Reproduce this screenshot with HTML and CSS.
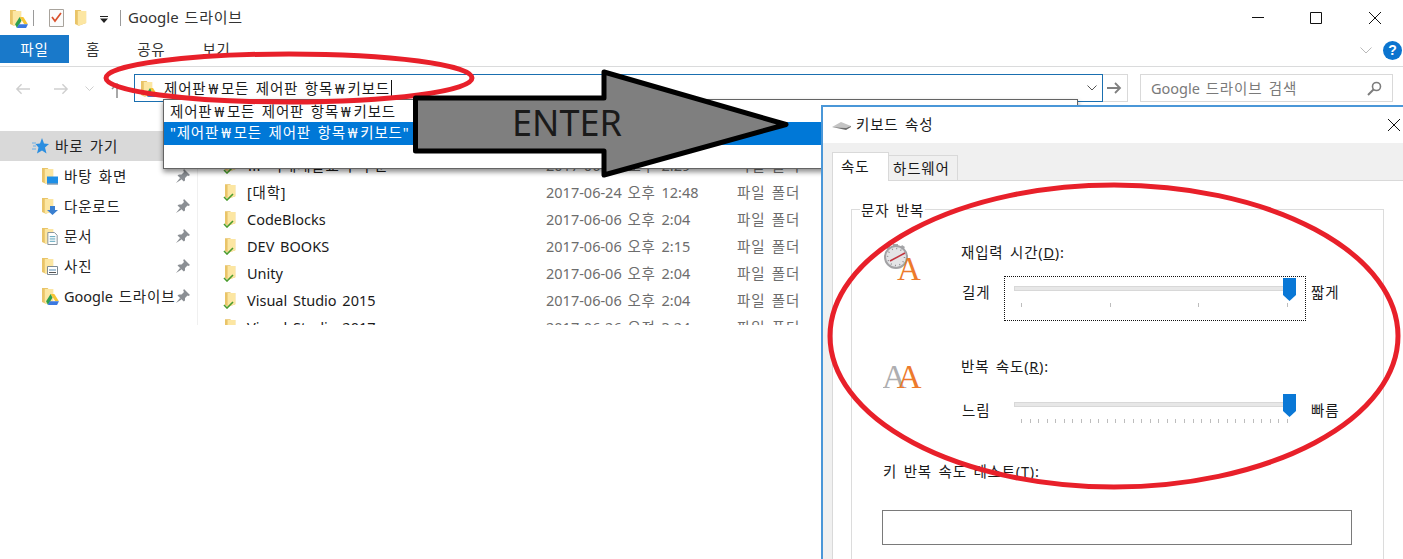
FILE: index.html
```html
<!DOCTYPE html>
<html lang="ko">

	<head>
		<meta charset="UTF-8">
		<title>Google 드라이브</title>
		<link rel="stylesheet" href="styles.css">
	</head>

	<body>
		<svg class="defs" width="0" height="0">
			<symbol id="folder" viewBox="0 0 14 18">
				<path d="M0 1h6l1 1h5v13l-8 3-4-2z" fill="#e9c468"/>
				<path d="M3 2h9v13l-8 3-1-1z" fill="#fce6a2"/>
			</symbol>
			<symbol id="check" viewBox="0 0 11 8">
				<path d="M1 4l3 3 6-6" fill="none" stroke="#4a9c2d" stroke-width="1.6"/>
			</symbol>
			<symbol id="drive" viewBox="0 0 14 12">
				<path d="M5 0h4l5 8h-4z" fill="#f6c533"/>
				<path d="M5 0l2 4-5 8-2-4z" fill="#2c9f4d"/>
				<path d="M4 8h10l-2 4H2z" fill="#3b78e0"/>
			</symbol>
			<symbol id="pin" viewBox="0 0 14 14">
				<path d="M8 0l6 6-1.500 1-1-.5L9 9v2.500L7.800 12.500 1.500 6.500 3 5.500h2.500L8 3l-.8-1.500zM4 9l1.500 1.500L0 14z" fill="#8b8f94"/>
			</symbol>
		</svg>

		<div class="page">
			<header class="titlebar">
				<svg class="ico-folder"><use href="#folder"/></svg>
				<svg class="ico-qa-drive"><use href="#drive"/></svg>
				<span class="sep"></span>
				<svg class="ico-doc" viewBox="0 0 15 18">
					<path d="M.5.500h14v17H.5z" fill="#fbfbfb" stroke="#a8a39c"/>
					<path d="M3 8l3 4 6-8" fill="none" stroke="#d9512c" stroke-width="1.7"/>
				</svg>
				<svg class="ico-qa-folder"><use href="#folder"/></svg>
				<svg class="ico-qa-more" viewBox="0 0 8 7">
					<path d="M0 0h8v1H0zM0 2.500h8L4 7z" fill="#222"/>
				</svg>
				<span class="sep sep-title"></span>
				<span class="win-title">Google <span class="ko">드라이브</span></span>
				<div class="win-btns">
					<span class="win-btn"><svg width="12" height="12"><path d="M0 5.500h12" stroke="#111"/></svg></span>
					<span class="win-btn"><svg width="12" height="12"><path d="M.5.500h11v11H.5z" fill="none" stroke="#111"/></svg></span>
					<span class="win-btn"><svg width="12" height="12"><path d="M0 0l12 12M12 0L0 12" stroke="#111"/></svg></span>
				</div>
			</header>

			<nav class="ribbon">
				<span class="tab-file ko">파일</span>
				<span class="tab tab-home ko">홈</span>
				<span class="tab tab-share ko">공유</span>
				<span class="tab tab-view ko">보기</span>
				<svg class="ribbon-fold" width="12" height="7"><path d="M.5.500L6 6 11.500.5" fill="none" stroke="#b9b9b9"/></svg>
				<span class="help">?</span>
			</nav>

			<div class="navbar">
				<svg class="nav-ico nav-back" width="15" height="12" viewBox="0 0 16 12"><path d="M16 6H2M7 1L2 6l5 5" fill="none" stroke="#cfcfcf" stroke-width="1.500"/></svg>
				<svg class="nav-ico nav-forward" width="15" height="12" viewBox="0 0 16 12"><path d="M0 6h14M9 1l5 5-5 5" fill="none" stroke="#cfcfcf" stroke-width="1.500"/></svg>
				<svg class="nav-ico nav-recent" width="9" height="6"><path d="M.5.500l4 4 4-4" fill="none" stroke="#cfcfcf"/></svg>
				<svg class="nav-ico nav-up" width="12" height="16" viewBox="0 0 12 16"><path d="M6 16V2M1 7l5-5 5 5" fill="none" stroke="#8c8c8c" stroke-width="1.500"/></svg>
				<div class="address">
					<svg class="addr-folder"><use href="#folder"/></svg>
					<svg class="addr-drive"><use href="#drive"/></svg>
					<span class="addr-text ko">제어판<span class="won">₩</span>모든 제어판 항목<span class="won">₩</span>키보드</span>
					<span class="caret"></span>
					<svg class="addr-chevron" width="10" height="6"><path d="M.5.500L5 5 9.500.5" fill="none" stroke="#555"/></svg>
				</div>
				<span class="go"><svg width="15" height="12" viewBox="0 0 15 12"><path d="M0 6h13M8 1l5 5-5 5" fill="none" stroke="#808080" stroke-width="1.800"/></svg></span>
				<div class="search">
					<span class="search-text">Google <span class="ko">드라이브 검색</span></span>
					<svg width="15" height="15" viewBox="0 0 15 15"><circle cx="9.500" cy="5.500" r="4" fill="none" stroke="#7c7c7c" stroke-width="1.600"/><path d="M6.500 8.500L1 14" stroke="#7c7c7c" stroke-width="2"/></svg>
				</div>
			</div>

			<main class="content">
				<aside class="sidebar">
					<div class="side-row side-quick">
						<svg class="ico-star" viewBox="0 0 17 16">
							<path d="M10 0l2 5.500 5 .5-4 3.500 1.500 6L10 12.500 5 15.500l1.500-6-3-3.500 4.500-.5z" fill="#2b8ee0"/>
							<path d="M0 5h4M1 8h3M0 11h4" stroke="#6aaee6"/>
						</svg>
						<span class="side-name ko">바로 가기</span>
					</div>
					<div class="side-row">
						<span class="side-ico">
							<svg class="ico-side-folder"><use href="#folder"/></svg>
							<svg class="badge" viewBox="0 0 11 8"><path d="M0 0h11v7H0z" fill="#1e8fe6"/><path d="M0 7h11v1H0z" fill="#4a6f8f"/></svg>
						</span>
						<span class="side-name ko">바탕 화면</span>
						<svg class="pin"><use href="#pin"/></svg>
					</div>
					<div class="side-row">
						<span class="side-ico">
							<svg class="ico-side-folder"><use href="#folder"/></svg>
							<svg class="badge" viewBox="0 0 11 9"><path d="M3 0h5v4h3L5.500 9 0 4h3z" fill="#3a7fd0"/></svg>
						</span>
						<span class="side-name ko">다운로드</span>
						<svg class="pin"><use href="#pin"/></svg>
					</div>
					<div class="side-row">
						<span class="side-ico">
							<svg class="ico-side-folder"><use href="#folder"/></svg>
							<svg class="badge badge-doc" viewBox="0 0 11 14"><path d="M.5.500h7l3 3v10H.5z" fill="#fff" stroke="#7d8a94"/><path d="M2.500 5h6M2.500 7.500h6M2.500 10h6" stroke="#4a9ab5"/></svg>
						</span>
						<span class="side-name ko">문서</span>
						<svg class="pin"><use href="#pin"/></svg>
					</div>
					<div class="side-row">
						<span class="side-ico">
							<svg class="ico-side-folder"><use href="#folder"/></svg>
							<svg class="badge" viewBox="0 0 11 9"><path d="M.5.500h10v8H.5z" fill="#fff" stroke="#7d8a94"/><path d="M2 6h7v1H2z" fill="#555"/><path d="M2 3h7v2H2z" fill="#a9c5da"/></svg>
						</span>
						<span class="side-name ko">사진</span>
						<svg class="pin"><use href="#pin"/></svg>
					</div>
					<div class="side-row">
						<span class="side-ico">
							<svg class="ico-side-folder"><use href="#folder"/></svg>
							<svg class="badge badge-drive"><use href="#drive"/></svg>
						</span>
						<span class="side-name">Google <span class="ko">드라이브</span></span>
						<svg class="pin"><use href="#pin"/></svg>
					</div>
				</aside>

				<section class="files">
					<div class="file-row">
						<span class="file-ico"><svg class="file-folder"><use href="#folder"/></svg><svg class="file-check"><use href="#check"/></svg></span>
						<span class="ko">Ⅲ 미래개발교육 구분</span>
						<span class="file-meta">2017-06-24 <span class="ko">오후</span> 2:29</span>
						<span class="file-meta ko">파일 폴더</span>
					</div>
					<div class="file-row">
						<span class="file-ico"><svg class="file-folder"><use href="#folder"/></svg><svg class="file-check"><use href="#check"/></svg></span>
						<span class="ko">[대학]</span>
						<span class="file-meta">2017-06-24 <span class="ko">오후</span> 12:48</span>
						<span class="file-meta ko">파일 폴더</span>
					</div>
					<div class="file-row">
						<span class="file-ico"><svg class="file-folder"><use href="#folder"/></svg><svg class="file-check"><use href="#check"/></svg></span>
						<span>CodeBlocks</span>
						<span class="file-meta">2017-06-06 <span class="ko">오후</span> 2:04</span>
						<span class="file-meta ko">파일 폴더</span>
					</div>
					<div class="file-row">
						<span class="file-ico"><svg class="file-folder"><use href="#folder"/></svg><svg class="file-check"><use href="#check"/></svg></span>
						<span>DEV BOOKS</span>
						<span class="file-meta">2017-06-06 <span class="ko">오후</span> 2:15</span>
						<span class="file-meta ko">파일 폴더</span>
					</div>
					<div class="file-row">
						<span class="file-ico"><svg class="file-folder"><use href="#folder"/></svg><svg class="file-check"><use href="#check"/></svg></span>
						<span>Unity</span>
						<span class="file-meta">2017-06-06 <span class="ko">오후</span> 2:04</span>
						<span class="file-meta ko">파일 폴더</span>
					</div>
					<div class="file-row">
						<span class="file-ico"><svg class="file-folder"><use href="#folder"/></svg><svg class="file-check"><use href="#check"/></svg></span>
						<span>Visual Studio 2015</span>
						<span class="file-meta">2017-06-06 <span class="ko">오후</span> 2:04</span>
						<span class="file-meta ko">파일 폴더</span>
					</div>
					<div class="file-row">
						<span class="file-ico"><svg class="file-folder"><use href="#folder"/></svg><svg class="file-check"><use href="#check"/></svg></span>
						<span>Visual Studio 2017</span>
						<span class="file-meta">2017-06-26 <span class="ko">오전</span> 3:24</span>
						<span class="file-meta ko">파일 폴더</span>
					</div>
				</section>
			</main>

			<!-- 주소창 자동완성 -->
			<div class="suggest">
				<div class="suggest-item ko">제어판<span class="won">₩</span>모든 제어판 항목<span class="won">₩</span>키보드</div>
				<div class="suggest-item suggest-active ko">"제어판<span class="won">₩</span>모든 제어판 항목<span class="won">₩</span>키보드"</div>
			</div>

			<!-- 키보드 속성 창 -->
			<div class="dialog">
				<div class="dlg-title">
					<svg class="dlg-ico" width="19" height="8" viewBox="0 0 19 8"><path d="M0 5l9-5 10 4-5 2z" fill="#c4c4c4"/><path d="M0 5l14 1 5-2v1l-5 3z" fill="#6d6d6d"/></svg>
					<span class="dlg-name ko">키보드 속성</span>
					<svg class="dlg-close" width="12" height="12"><path d="M0 0l12 12M12 0L0 12" stroke="#111"/></svg>
				</div>
				<div class="dlg-body">
					<div class="dlg-tabs">
						<span class="dlg-tab dlg-tab-on ko">속도</span>
						<span class="dlg-tab ko">하드웨어</span>
					</div>
					<div class="dlg-panel">
						<fieldset class="group">
							<legend class="ko">문자 반복</legend>

							<div class="setting">
								<svg class="setting-ico" viewBox="0 0 40 40">
									<path d="M10 2h5v3h-5zM3 5l3-2 2 3-3 2zM22 5l-3-2-2 3 3 2z" fill="#a6a6a8"/>
									<circle cx="13" cy="15" r="11" fill="#e4e4e6" stroke="#a2a2a5" stroke-width="2"/>
									<circle cx="13" cy="15" r="8.500" fill="none" stroke="#8d8d90" stroke-width="1.500" stroke-dasharray="1 3.450"/>
									<path d="M7 19l15-8" stroke="#c2343f" stroke-width="1.500"/>
									<text class="ico-a" x="14" y="38" font-size="33">A</text>
								</svg>
								<div class="setting-main">
									<div class="setting-label ko">재입력 시간(<u>D</u>):</div>
									<div class="slider-row">
										<span class="end-label ko">길게</span>
										<div class="slider slider-focus">
											<div class="track"></div>
											<svg class="thumb" width="13" height="23"><path d="M0 0h13v17l-6.500 6L0 17z" fill="#0a78d6"/></svg>
											<div class="ticks"><i></i><i></i><i></i><i></i></div>
										</div>
										<span class="end-label end-right ko">짧게</span>
									</div>
								</div>
							</div>

							<div class="setting setting-second">
								<svg class="setting-ico" viewBox="0 0 40 40">
									<text class="ico-a ico-a-gray" x="-1" y="30" font-size="34">A</text>
									<text class="ico-a" x="14" y="30" font-size="34">A</text>
								</svg>
								<div class="setting-main">
									<div class="setting-label ko">반복 속도(<u>R</u>):</div>
									<div class="slider-row">
										<span class="end-label ko">느림</span>
										<div class="slider">
											<div class="track"></div>
											<svg class="thumb" width="13" height="23"><path d="M0 0h13v17l-6.500 6L0 17z" fill="#0a78d6"/></svg>
											<div class="ticks">
												<i></i><i></i><i></i><i></i><i></i><i></i><i></i><i></i>
												<i></i><i></i><i></i><i></i><i></i><i></i><i></i><i></i>
												<i></i><i></i><i></i><i></i><i></i><i></i><i></i><i></i>
												<i></i><i></i><i></i><i></i><i></i><i></i><i></i><i></i>
											</div>
										</div>
										<span class="end-label end-right ko">빠름</span>
									</div>
								</div>
							</div>

							<div class="test-label ko">키 반복 속도 테스트(<u>T</u>):</div>
							<div class="test-input"></div>
						</fieldset>
					</div>
				</div>
			</div>

			<!-- 빨간 타원, 화살표 표시 -->
			<svg class="marks" width="1403" height="559" viewBox="0 0 1403 559">
				<ellipse cx="289" cy="78" rx="183" ry="24" fill="none" stroke="#e8202a" stroke-width="5"/>
				<ellipse cx="1114" cy="336" rx="284" ry="151" fill="none" stroke="#e8202a" stroke-width="5"/>
				<path d="M415.500 98H604V72L786 124.500 604 175V151H415.500z" fill="#7f7f7f" stroke="#000" stroke-width="5" stroke-linejoin="round"/>
				<text class="enter" x="512" y="136">ENTER</text>
			</svg>
		</div>
	</body>

</html>
```

FILE: styles.css
```css
* {
	box-sizing: border-box;
}

body {
	margin: 0;
	background: #fff;
	color: #1a1a1a;
	font-family: "Noto Sans", "Noto Sans CJK KR", sans-serif;
	font-size: 14.5px;
	word-spacing: 2px;
	overflow: hidden;
}

/* hangul runs wider in the original font */
.ko {
	letter-spacing: .8px;
}

.won {
	margin: 0 2px;
}

.defs {
	position: absolute;
}

.page {
	position: relative;
	width: 1403px;
	height: 559px;
	overflow: hidden;
}

/* title bar */
.titlebar {
	height: 35px;
	display: flex;
	align-items: center;
	position: relative;
}

.ico-folder {
	width: 13px;
	height: 17px;
	margin-left: 10px;
}

.ico-qa-drive {
	width: 13px;
	height: 11px;
	margin: 9px 0 0 -8px;
}

.sep {
	width: 1px;
	height: 16px;
	background: #9a9a9a;
	margin-left: 5px;
}

.ico-doc {
	width: 15px;
	height: 18px;
	margin-left: 15px;
}

.ico-qa-folder {
	width: 13px;
	height: 17px;
	margin-left: 11px;
}

.ico-qa-more {
	width: 8px;
	height: 7px;
	margin: 3px 0 0 12px;
}

.sep-title {
	margin-left: 12px;
}

.win-title {
	margin-left: 7px;
	margin-top: -3px;
	font-size: 15px;
	color: #333;
}

.win-btns {
	margin-left: auto;
	display: flex;
	margin-right: -1px;
}

.win-btn {
	width: 58px;
	display: flex;
	justify-content: center;
}

.win-btn:last-child {
	margin-left: 1px;
}

/* ribbon tabs */
.ribbon {
	height: 32px;
	display: flex;
	align-items: flex-start;
	border-bottom: 1px solid #dadbdc;
}

.tab-file {
	width: 69px;
	height: 28px;
	padding-bottom: 2px;
	background: #1979ca;
	color: #fff;
	display: flex;
	align-items: center;
	justify-content: center;
}

.tab {
	line-height: 28px;
	color: #333;
}

.tab-home {
	margin-left: 17px;
}

.tab-share {
	margin-left: 37px;
}

.tab-view {
	margin-left: 37px;
}

.ribbon-fold {
	margin: 12px 0 0 auto;
}

.help {
	width: 19px;
	height: 19px;
	margin: 6px 1px 0 11px;
	border-radius: 50%;
	background: #0b74cf;
	color: #fff;
	font-family: "Liberation Sans", sans-serif;
	font-size: 14px;
	font-weight: bold;
	line-height: 19px;
	text-align: center;
}

/* address row */
.navbar {
	height: 64px;
	padding-top: 7px;
	display: flex;
	align-items: flex-start;
}

.nav-ico {
	flex: none;
}

.nav-back {
	margin: 9px 0 0 15px;
}

.nav-forward {
	margin: 9px 0 0 24px;
}

.nav-recent {
	margin: 12px 0 0 16px;
}

.nav-up {
	margin: 8px 0 0 17px;
}

.address {
	width: 969px;
	height: 28px;
	margin-left: 11px;
	padding-left: 6px;
	border: 1px solid #1a6fb0;
	display: flex;
	align-items: center;
	position: relative;
}

.addr-folder {
	width: 13px;
	height: 17px;
}

.addr-drive {
	position: absolute;
	left: 11px;
	top: 13px;
	width: 11px;
	height: 9px;
}

.addr-text {
	margin-left: 10px;
	margin-top: -2px;
}

.caret {
	width: 1px;
	height: 17px;
	background: #111;
	margin-left: 1px;
}

.addr-chevron {
	margin: 0 5px 0 auto;
}

.go {
	width: 26px;
	height: 28px;
	margin-left: -1px;
	border: 1px solid #d9d9d9;
	border-left: none;
	display: flex;
	align-items: center;
	justify-content: center;
}

.search {
	width: 253px;
	height: 28px;
	margin-left: 12px;
	padding: 0 10px;
	border: 1px solid #d9d9d9;
	display: flex;
	align-items: center;
	justify-content: space-between;
}

.search-text {
	margin-top: -2px;
	color: #7a7a7a;
}

/* sidebar and file list */
.content {
	height: 194px;
	display: flex;
	overflow: hidden;
}

.sidebar {
	width: 198px;
	flex: none;
	border-right: 1px solid #f0f0f0;
}

.side-row {
	height: 30px;
	display: flex;
	align-items: center;
	padding-left: 42px;
}

.side-quick {
	background: #d9d9d9;
	padding-left: 32px;
}

.ico-star {
	width: 17px;
	height: 16px;
	margin-right: 6px;
	flex: none;
}

.side-ico {
	width: 22px;
	height: 18px;
	flex: none;
	position: relative;
}

.ico-side-folder {
	width: 13px;
	height: 17px;
	display: block;
}

.badge {
	position: absolute;
	left: 5px;
	bottom: 0;
	width: 11px;
	height: 9px;
}

.badge-doc {
	height: 13px;
	left: 5px;
}

.badge-drive {
	left: 4px;
	width: 13px;
	height: 11px;
}

.side-name {
	width: 111px;
	flex: none;
	margin-bottom: 2px;
	white-space: nowrap;
	overflow: hidden;
	color: #222;
}

.pin {
	width: 14px;
	height: 14px;
	margin-left: 1px;
	flex: none;
}

.files {
	padding: 20px 0 0 25px;
}

.file-row {
	height: 27px;
	display: grid;
	grid-template-columns: 24px 299px 191px auto;
	align-items: center;
	white-space: nowrap;
}

.file-ico {
	width: 16px;
	height: 18px;
	position: relative;
}

.file-folder {
	position: absolute;
	left: 2px;
	top: 0;
	width: 12px;
	height: 16px;
}

.file-check {
	position: absolute;
	left: 0;
	bottom: 0;
	width: 11px;
	height: 8px;
}

.file-meta {
	color: #6d6d6d;
}

/* autocomplete under the address bar */
.suggest {
	position: absolute;
	left: 163px;
	top: 99px;
	width: 915px;
	height: 70px;
	background: #fff;
	border: 1px solid #646464;
	box-shadow: 0 3px 5px rgba(0, 0, 0, .45);
	padding-top: 1px;
}

.suggest-item {
	height: 21px;
	line-height: 20px;
	padding-left: 6px;
}

.suggest-active {
	height: 23px;
	line-height: 21px;
	background: #0078d7;
	color: #fff;
}

/* keyboard dialog */
.dialog {
	position: absolute;
	left: 821px;
	top: 105px;
	width: 582px;
	height: 454px;
	background: #f0f0f0;
	border-left: 2px solid #4a97d8;
	border-top: 2px solid #4a97d8;
	overflow: hidden;
}

.dlg-title {
	height: 36px;
	background: #fff;
	display: flex;
	align-items: center;
	padding-left: 9px;
}

.dlg-ico {
	margin: 1px 5px 0 0;
}

.dlg-name {
	margin-bottom: 3px;
}

.dlg-close {
	margin-left: auto;
	margin-right: 3px;
}

.dlg-body {
	padding: 10px 0 0 9px;
}

.dlg-tabs {
	display: flex;
	align-items: flex-end;
	height: 28px;
	position: relative;
	z-index: 1;
	margin-bottom: -1px;
}

.dlg-tab {
	width: 69px;
	height: 26px;
	padding-left: 4px;
	background: #f0f0f0;
	border: 1px solid #d9d9d9;
	border-left: none;
	line-height: 24px;
}

.dlg-tab-on {
	width: 57px;
	height: 29px;
	padding-left: 8px;
	background: #fff;
	border-left: 1px solid #d9d9d9;
	border-bottom: none;
	line-height: 26px;
}

.dlg-panel {
	width: 580px;
	height: 400px;
	background: #fff;
	border: 1px solid #d9d9d9;
	padding: 17px 0 0 18px;
}

.group {
	width: 533px;
	height: 420px;
	margin: 0;
	padding: 22px 0 0 31px;
	border: 1px solid #dcdcdc;
	min-width: 0;
}

.group legend {
	padding: 2px 1px 0;
	margin-left: -23px;
	line-height: 20px;
}

.setting {
	display: flex;
}

.setting-second {
	margin-top: 37px;
}

.setting-ico {
	width: 40px;
	height: 40px;
	flex: none;
	margin: 0 38px 0 0;
}

.ico-a {
	font-family: "Liberation Serif", serif;
	fill: #ed7a2c;
}

.ico-a-gray {
	fill: #aeaeb0;
}

.setting-main {
	flex: none;
}

.setting-label {
	line-height: 20px;
}

.setting-second .setting-label {
	margin-top: -2px;
}

.slider-row {
	display: flex;
	margin-top: 14px;
}

.setting-second .slider-row {
	margin-top: 16px;
}

.end-label {
	width: 43px;
	padding-left: 1px;
	line-height: 20px;
	margin-top: 6px;
}

.setting-second .end-label {
	margin-top: 8px;
}

.end-right {
	margin-left: 5px;
	padding-left: 0;
}

.slider {
	width: 302px;
	height: 45px;
	position: relative;
	border: 1px solid transparent;
	padding: 9px 9px 0;
}

.slider-focus {
	border: 1px dotted #111;
}

.track {
	height: 5px;
	background: #e7e7e7;
	border: 1px solid #d8d8d8;
}

.thumb {
	position: absolute;
	right: 9px;
	top: 1px;
}

.ticks {
	display: flex;
	justify-content: space-between;
	padding: 0 8px 0 7px;
	margin-top: 12px;
}

.ticks i {
	width: 1px;
	height: 4px;
	background: #bdbdbd;
}

.test-label {
	margin-top: 24px;
	line-height: 20px;
}

.test-input {
	width: 470px;
	height: 35px;
	margin: 29px 0 0 -1px;
	border: 1px solid #7a7a7a;
}

/* hand drawn marks on top of the screenshot */
.marks {
	position: absolute;
	left: 0;
	top: 0;
	pointer-events: none;
}

.enter {
	font-family: "Noto Sans", sans-serif;
	font-size: 36px;
	word-spacing: 0;
	fill: #1a1a1a;
}
```
